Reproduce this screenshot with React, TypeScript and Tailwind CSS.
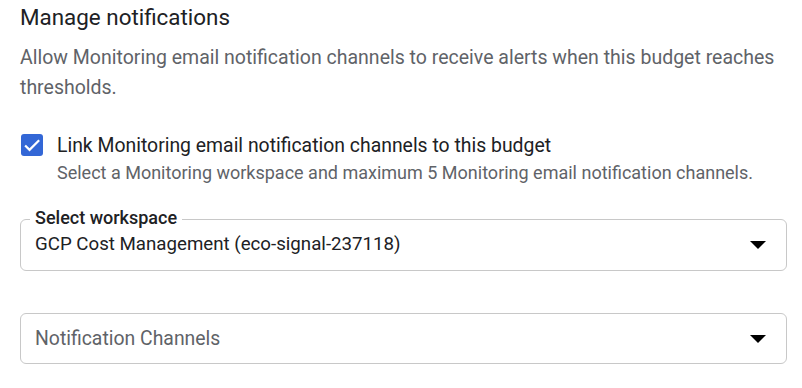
export default function App() {
  return (
    <div
      className="w-[802px] h-[388px] bg-white pl-5 pr-[15px] pt-[3px] text-[#202124]"
      style={{ fontFamily: 'Roboto, "Liberation Sans", sans-serif' }}
    >
      <h2 className="text-[22.4px] leading-[28px] font-normal">Manage notifications</h2>
      <p className="mt-[12px] pr-[10px] text-[19.5px] leading-[30px] text-[#5f6368]">
        Allow Monitoring email notification channels to receive alerts when this budget reaches thresholds.
      </p>

      <div className="mt-[28.5px] flex gap-[14px]">
        <div className="mt-[2.5px] ml-px flex h-[22px] w-[22px] shrink-0 items-center justify-center rounded-[3px] bg-[#3367d6]">
          <svg viewBox="0 0 24 24" className="h-[22px] w-[22px]" fill="none" stroke="white" strokeWidth="2.4">
            <path d="M4.5 12.5l4.8 4.8L19.8 6.8" />
          </svg>
        </div>
        <div>
          <div className="text-[19.4px] leading-[27px]">Link Monitoring email notification channels to this budget</div>
          <div className="text-[18px] leading-[27px] text-[#5f6368]">
            Select a Monitoring workspace and maximum 5 Monitoring email notification channels.
          </div>
        </div>
      </div>

      <div className="relative mt-[33.5px] flex h-[52px] items-center justify-between rounded-[6px] border-[1.5px] border-[#c8c8c8] pl-[14px] pr-[20px]">
        <span className="absolute -top-[13px] left-[9px] bg-white px-[5px] text-[18px] font-medium leading-[22px]">
          Select workspace
        </span>
        <span className="mt-[-1px] text-[18.7px]">GCP Cost Management (eco-signal-237118)</span>
        <svg viewBox="0 0 16 8" className="h-[8px] w-[16px]">
          <path d="M0 0h16L8 8z" fill="#000" />
        </svg>
      </div>

      <div className="mt-[42px] flex h-[51px] items-center justify-between rounded-[6px] border-[1.5px] border-[#c8c8c8] pl-[14px] pr-[20px]">
        <span className="text-[19.4px] text-[#5f6368]">Notification Channels</span>
        <svg viewBox="0 0 16 8" className="h-[8px] w-[16px]">
          <path d="M0 0h16L8 8z" fill="#000" />
        </svg>
      </div>
    </div>
  );
}
